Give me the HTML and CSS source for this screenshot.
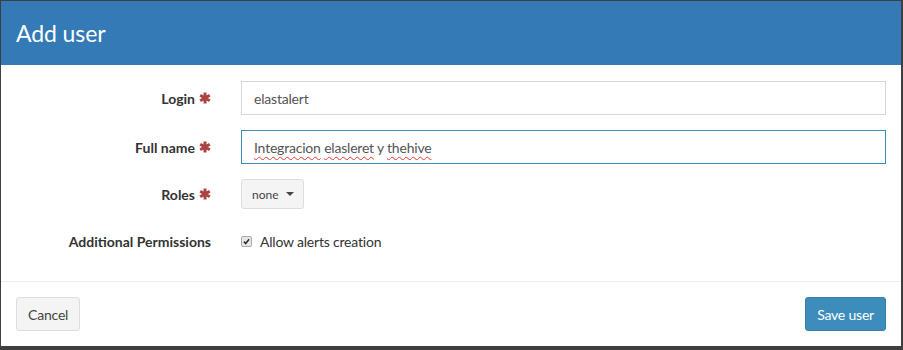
FILE: index.html
```html
<!DOCTYPE html>
<html lang="en">
<head>
  <meta charset="UTF-8">
  <meta name="viewport" content="width=device-width, initial-scale=1.0">
  <title>Add user</title>
  <link rel="stylesheet" href="styles.css">
</head>
<body>
<div class="modal">
  <div class="modal-header">
    <h3 class="modal-title">Add user</h3>
  </div>
  <form class="modal-body">
    <div class="form-row">
      <label class="control-label">Login <svg class="required" viewBox="0 0 12 12"><path d="M6 0.5v11M1.2 3.2l9.6 5.6M1.2 8.8l9.6-5.6"/></svg></label>
      <div class="control">
        <div class="form-control"><span>elastalert</span></div>
      </div>
    </div>
    <div class="form-row">
      <label class="control-label">Full name <svg class="required" viewBox="0 0 12 12"><path d="M6 0.5v11M1.2 3.2l9.6 5.6M1.2 8.8l9.6-5.6"/></svg></label>
      <div class="control">
        <div class="form-control focused"><span><span class="typo">Integracion</span> <span class="typo">elasleret</span> y <span class="typo">thehive</span></span></div>
      </div>
    </div>
    <div class="form-row roles-row">
      <label class="control-label">Roles <svg class="required" viewBox="0 0 12 12"><path d="M6 0.5v11M1.2 3.2l9.6 5.6M1.2 8.8l9.6-5.6"/></svg></label>
      <div class="control">
        <button type="button" class="btn-dropdown">none <span class="caret"></span></button>
      </div>
    </div>
    <div class="form-row check-row">
      <label class="control-label">Additional Permissions</label>
      <div class="control">
        <label class="checkbox">
          <span class="check-box"><svg viewBox="0 0 10 10"><path d="M2.2 5.2l1.9 2 3.8-4.6"/></svg></span>
          Allow alerts creation
        </label>
      </div>
    </div>
  </form>
  <div class="modal-footer">
    <button type="button" class="btn btn-default">Cancel</button>
    <button type="button" class="btn btn-primary">Save user</button>
  </div>
</div>
</body>
</html>
```

FILE: styles.css
```css
body {
  margin: 0;
  padding: 1px 2px 4px 1px;
  background-color: #3f3f3f;
  font-family: Lato, "Open Sans", sans-serif;
  font-size: 14px;
  color: #333;
  height: 350px;
  box-sizing: border-box;
  overflow: hidden;
}
.modal {
  background-color: #fff;
  height: 345px;
  display: flex;
  flex-direction: column;
}
.modal-header {
  background-color: #337ab7;
  height: 64px;
  padding: 0 15px;
  display: flex;
  align-items: center;
}
.modal-title {
  margin: 0;
  color: #fff;
  font-weight: normal;
  font-size: 23px;
  letter-spacing: -0.1px;
}
.modal-body {
  padding: 16px 15px 23px 15px;
  margin: 0;
}
.form-row {
  display: flex;
  align-items: center;
  height: 34px;
  margin-bottom: 15px;
}
.roles-row {
  height: 30px;
}
.check-row {
  margin-bottom: 0;
}
.control-label {
  width: 195px;
  text-align: right;
  font-weight: bold;
  display: flex;
  justify-content: flex-end;
  align-items: center;
  gap: 4px;
}
.required {
  width: 12px;
  height: 12px;
  stroke: #a94442;
  stroke-width: 3;
  fill: none;
}
.control {
  flex: 1;
  margin-left: 30px;
}
.form-control {
  height: 34px;
  box-sizing: border-box;
  border: 1px solid #d2d6de;
  padding: 0 12px;
  display: flex;
  align-items: center;
  color: #555;
  white-space: pre;
  letter-spacing: -0.2px;
}
.form-control.focused {
  border-color: #3c8dbc;
}
.typo {
  text-decoration: underline wavy #e53935;
  text-decoration-thickness: 1px;
  text-underline-offset: 3px;
  text-decoration-skip-ink: none;
}
.btn-dropdown {
  height: 30px;
  padding: 0 9px 0 10px;
  font-family: inherit;
  font-size: 12px;
  color: #444;
  background-color: #f4f4f4;
  border: 1px solid #ddd;
  border-radius: 3px;
  display: flex;
  align-items: center;
  gap: 7px;
}
.caret {
  width: 0;
  height: 0;
  border-left: 4px solid transparent;
  border-right: 4px solid transparent;
  border-top: 4px solid #444;
}
.checkbox {
  display: flex;
  align-items: center;
  gap: 8px;
  color: #333;
  letter-spacing: -0.2px;
}
.check-box {
  width: 11px;
  height: 11px;
  box-sizing: border-box;
  border: 1px solid #aaa;
  border-radius: 2px;
  background-color: #e8e8e8;
  display: flex;
}
.check-box svg {
  width: 9px;
  height: 9px;
  stroke: #333;
  stroke-width: 1.8;
  fill: none;
}
.modal-footer {
  border-top: 1px solid #eee;
  padding: 15px;
  display: flex;
  justify-content: space-between;
}
.btn {
  height: 34px;
  padding: 0 11px;
  font-family: inherit;
  font-size: 14px;
  letter-spacing: -0.2px;
  border-radius: 3px;
  border: 1px solid transparent;
}
.btn-default {
  background-color: #f4f4f4;
  border-color: #ddd;
  color: #444;
}
.btn-primary {
  background-color: #3c8dbc;
  border-color: #367fa9;
  color: #fff;
}
```
